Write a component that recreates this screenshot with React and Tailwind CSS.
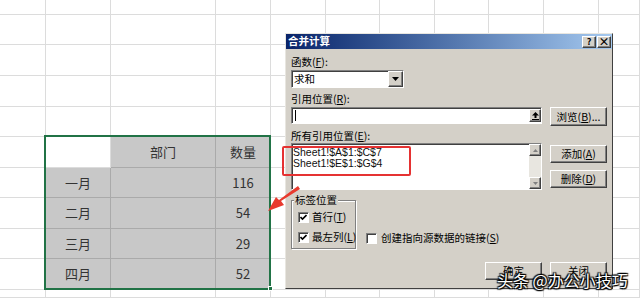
import React from 'react';

const COLS = ['w-[46px]', 'w-[65px]', 'w-[105px]', 'w-[55px]', 'w-[55px]', 'w-[54px]', 'w-[55px]', 'w-[54px]', 'w-[55px]', 'w-[55px]', 'flex-1'];
const ROWS = ['h-[15px]', 'h-[30px]', 'h-[31px]', 'h-[31px]', 'h-[30px]', 'h-[31px]', 'h-[30px]', 'h-[31px]', 'h-[30px]', 'h-[31px]', 'flex-1'];

// table content by row index -> [col1, col2, col3]
const TABLE = {
  5: ['', '部门', '数量'],
  6: ['一月', '', '116'],
  7: ['二月', '', '54'],
  8: ['三月', '', '29'],
  9: ['四月', '', '52'],
};

const raised = 'border border-t-white border-l-white border-b-[#404040] border-r-[#404040] shadow-[inset_-1px_-1px_0_#808080]';
const sunken = 'border border-t-[#808080] border-l-[#808080] border-b-white border-r-white shadow-[inset_1px_1px_0_#404040]';

const Cell = ({ row, col }) => {
  const t = TABLE[row];
  const inTable = t && col >= 1 && col <= 3;
  const gray = inTable && !(row === 5 && col === 1);
  return (
    <div
      className={`${COLS[col]} shrink-0 border-r border-b flex items-center justify-center text-[13px] text-[#333] ${
        gray ? 'bg-[#c8c8c8] border-[#aaaaaa]' : 'bg-white border-[#dcdcdc]'
      }`}
    >
      {inTable ? t[col - 1] : ''}
    </div>
  );
};

const Button = ({ children, className = '' }) => (
  <div className={`w-[57px] h-[18px] bg-[#d4d0c8] ${raised} flex items-center justify-center whitespace-nowrap text-black ${className}`}>
    {children}
  </div>
);

const Check = ({ checked }) => (
  <div className={`w-[11px] h-[11px] shrink-0 bg-white ${sunken} flex items-center justify-center`}>
    {checked && (
      <svg width="7" height="7" viewBox="0 0 7 7">
        <path d="M0.5 3 L2.5 5 L6.5 1" stroke="#000" strokeWidth="1.6" fill="none" />
      </svg>
    )}
  </div>
);

const Dialog = () => (
  <div className="absolute left-[285px] top-[33px] w-[328px] h-[256px] bg-[#d4d0c8] border border-t-[#e8e6e0] border-l-[#e8e6e0] border-b-[#404040] border-r-[#404040] flex flex-col text-[10.5px] leading-[14px] text-black">
    <div className="h-[15px] shrink-0 bg-gradient-to-r from-[#0a246a] to-[#a6caf0] flex items-center justify-between pl-[2px] pr-[1px]">
      <span className="text-white font-bold text-[10.5px] leading-none">合并计算</span>
      <div className="flex gap-[1px]">
        <div className={`w-[14px] h-[12px] bg-[#d4d0c8] ${raised} flex items-center justify-center text-[9px] font-bold leading-none`}>?</div>
        <div className={`w-[14px] h-[12px] bg-[#d4d0c8] ${raised} flex items-center justify-center text-[11px] font-bold leading-none`}>×</div>
      </div>
    </div>

    <div className="relative flex flex-col px-[5px]">
      <div className="mt-[6px]">函数(<u>F</u>):</div>
      <div className={`mt-[1px] w-[113px] h-[18px] bg-white ${sunken} flex items-center justify-between pl-[2px]`}>
        <span>求和</span>
        <div className={`w-[15px] h-full bg-[#d4d0c8] ${raised} flex items-center justify-center`}>
          <svg width="7" height="4" viewBox="0 0 7 4"><path d="M0 0 H7 L3.5 4 Z" fill="#000" /></svg>
        </div>
      </div>

      <div className="mt-[4px]">引用位置(<u>R</u>):</div>
      <div className="mt-[1px] flex items-start justify-between">
        <div className={`w-[251px] h-[17px] bg-white ${sunken} flex items-center justify-between pl-[3px]`}>
          <div className="w-[1px] h-[11px] bg-black" />
          <div className={`w-[12px] h-[13px] bg-[#d4d0c8] ${raised} flex items-center justify-center`}>
            <svg width="7" height="8" viewBox="0 0 7 8"><path d="M3.5 0 L7 3.5 H4.5 V6 H2.5 V3.5 H0 Z M0 7 H7 V8 H0 Z" fill="#000" /></svg>
          </div>
        </div>
        <Button className="h-[19px]">浏览(<u>B</u>)...</Button>
      </div>

      <div className="mt-[3px]">所有引用位置(<u>E</u>):</div>
      <div className="flex items-start justify-between">
        <div className={`w-[251px] h-[47px] bg-white ${sunken} flex justify-between`}>
          <div className="pl-[1px] pt-[3px] text-[10.5px] leading-[11px] text-[#111] font-['Liberation_Sans',sans-serif]">
            <div>Sheet1!$A$1:$C$7</div>
            <div>Sheet1!$E$1:$G$4</div>
          </div>
          <div className="w-[12px] h-full bg-[#e8e6e0] flex flex-col justify-between">
            <div className={`h-[12px] bg-[#d4d0c8] ${raised} flex items-center justify-center`}>
              <svg width="5" height="3" viewBox="0 0 5 3"><path d="M0 3 H5 L2.5 0 Z" fill="#808080" /></svg>
            </div>
            <div className={`h-[12px] bg-[#d4d0c8] ${raised} flex items-center justify-center`}>
              <svg width="5" height="3" viewBox="0 0 5 3"><path d="M0 0 H5 L2.5 3 Z" fill="#808080" /></svg>
            </div>
          </div>
        </div>
        <div className="flex flex-col gap-[7px] pt-[2px]">
          <Button>添加(<u>A</u>)</Button>
          <Button>删除(<u>D</u>)</Button>
        </div>
      </div>

      <div className="mt-[10px] flex items-end gap-[10px]">
        <div className="relative w-[65px] h-[49px] shrink-0 border border-[#808080] shadow-[1px_1px_0_white,inset_1px_1px_0_white] flex flex-col justify-end gap-[6px] pl-[6px] pb-[4px]">
          <span className="absolute -top-[8px] left-[2px] bg-[#d4d0c8] px-[1px] whitespace-nowrap">标签位置</span>
          <div className="flex items-center gap-[3px] whitespace-nowrap"><Check checked /><span>首行(<u>T</u>)</span></div>
          <div className="flex items-center gap-[3px] whitespace-nowrap"><Check checked /><span>最左列(<u>L</u>)</span></div>
        </div>
        <div className="flex items-center gap-[4px] pb-[4px] whitespace-nowrap"><Check /><span>创建指向源数据的链接(<u>S</u>)</span></div>
      </div>

      <div className="mt-[13px] flex justify-end gap-[8px]">
        <Button>确定</Button>
        <Button>关闭</Button>
      </div>

      <div className="absolute left-[-4px] top-[97px] w-[129px] h-[30px] border-2 border-[#e53232] rounded-[2px]" />
    </div>
  </div>
);

export default function App() {
  return (
    <div className="relative w-[640px] h-[298px] overflow-hidden bg-white font-['Noto_Sans_CJK_SC','Noto_Sans',sans-serif]">
      <div className="flex flex-col h-full">
        {ROWS.map((rh, r) => (
          <div key={r} className={`${rh} shrink-0 flex`}>
            {COLS.map((_, c) => (
              <Cell key={c} row={r} col={c} />
            ))}
          </div>
        ))}
      </div>

      {/* selection outline */}
      <div className="absolute left-[44px] top-[135px] w-[227px] h-[155px] border-2 border-[#217346]" />
      <div className="absolute left-[268px] top-[286px] w-[5px] h-[5px] bg-[#217346] border border-white" />

      <Dialog />

      {/* red arrow */}
      <svg className="absolute left-0 top-0" width="640" height="298" viewBox="0 0 640 298">
        <path d="M298 186 L300 189 L281 201 L284 205 L268 211 L276 197 L279 200 Z" fill="#e83a2e" />
      </svg>

      <div className="absolute left-[497px] top-[270px] text-[16px] leading-[20px] text-white whitespace-nowrap [text-shadow:0_0_2px_#000,1px_1px_1px_#000,-1px_-1px_1px_#000,1px_-1px_1px_#000,-1px_1px_1px_#000]">
        头条 @办公小技巧
      </div>
    </div>
  );
}
